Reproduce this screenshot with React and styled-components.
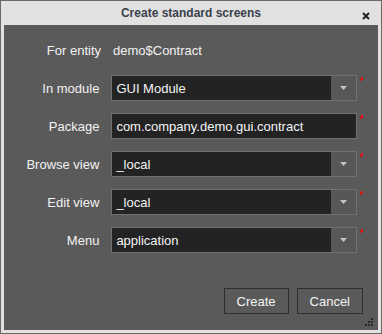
import React from 'react';
import styled, { createGlobalStyle } from 'styled-components';

const GlobalStyle = createGlobalStyle`
  html, body {
    margin: 0;
    padding: 0;
    background: #e1e1e1;
  }
  body {
    font-family: "Liberation Sans", Arial, sans-serif;
  }
`;

// Window frame
const Window = styled.div`
  box-sizing: border-box;
  width: 382px;
  height: 334px;
  display: flex;
  flex-direction: column;
  background: #e1e1e1;
  border: 1px solid #6a6a6a;
  padding: 0 3px 3px 3px;
`;

const TitleBar = styled.div`
  height: 24px;
  flex: none;
  display: flex;
  align-items: center;
  justify-content: center;
  position: relative;
  font-size: 12px;
  font-weight: bold;
  color: #3a414c;
`;

const CloseButton = styled.div`
  position: absolute;
  right: 8px;
  top: 11px;
  width: 8px;
  height: 8px;
  display: flex;
`;

// Content panel
const Content = styled.div`
  flex: 1;
  position: relative;
  display: flex;
  flex-direction: column;
  background: #5a5a5a;
  padding: 12px 15px 16px 4px;
`;

const Form = styled.div`
  display: flex;
  flex-direction: column;
  gap: 12px;
`;

const Row = styled.div`
  display: flex;
  align-items: center;
  height: 26px;
`;

const Label = styled.div`
  width: 93px;
  text-align: right;
  font-size: 13px;
  color: #f2f2f2;
  margin-right: 12px;
`;

const Value = styled.div`
  font-size: 13px;
  color: #f2f2f2;
`;

const Field = styled.div`
  box-sizing: border-box;
  width: 250px;
  height: 26px;
  display: flex;
  align-items: stretch;
  background: #232323;
  border: 1px solid #707070;
`;

const FieldText = styled.div`
  flex: 1;
  display: flex;
  align-items: center;
  padding-left: 4px;
  font-size: 13px;
  color: #f4f4f4;
`;

const DropButton = styled.div`
  width: 25px;
  display: flex;
  align-items: center;
  justify-content: center;
  background: #575757;
`;

const Required = styled.div`
  align-self: flex-start;
  margin: 2px 0 0 4px;
  width: 2px;
  height: 3px;
  background: #e01818;
  box-shadow: -1px 1px 0 #b02020;
`;

const Footer = styled.div`
  margin-top: auto;
  display: flex;
  justify-content: flex-end;
  gap: 8px;
`;

const Button = styled.div`
  box-sizing: border-box;
  height: 26px;
  padding: 0 12px;
  min-width: ${({ wide }) => (wide ? 61 : 59)}px;
  display: flex;
  align-items: center;
  justify-content: center;
  border: 1px solid #2e2e2e;
  font-size: 13px;
  color: #f4f4f4;
`;

const Grip = styled.svg`
  position: absolute;
  right: 5px;
  bottom: 4px;
`;

const Arrow = () => (
  <svg width="7" height="4" viewBox="0 0 7 4">
    <path d="M0 0h7L3.5 4z" fill="#c4c4c4" />
  </svg>
);

const ComboRow = ({ label, value, combo }) => (
  <Row>
    <Label>{label}</Label>
    <Field>
      <FieldText>{value}</FieldText>
      {combo && (
        <DropButton>
          <Arrow />
        </DropButton>
      )}
    </Field>
    <Required />
  </Row>
);

const App = () => (
  <>
    <GlobalStyle />
    <Window>
      <TitleBar>
        Create standard screens
        <CloseButton>
          <svg width="8" height="8" viewBox="0 0 8 8">
            <path d="M1 1l6 6M7 1L1 7" stroke="#222" strokeWidth="2" />
          </svg>
        </CloseButton>
      </TitleBar>
      <Content>
        <Form>
          <Row>
            <Label>For entity</Label>
            <Value>demo$Contract</Value>
          </Row>
          <ComboRow label="In module" value="GUI Module" combo />
          <ComboRow label="Package" value="com.company.demo.gui.contract" />
          <ComboRow label="Browse view" value="_local" combo />
          <ComboRow label="Edit view" value="_local" combo />
          <ComboRow label="Menu" value="application" combo />
        </Form>
        <Footer>
          <Button>Create</Button>
          <Button wide>Cancel</Button>
        </Footer>
        <Grip width="8" height="8" viewBox="0 0 8 8">
          <g fill="#2a2a2a">
            <rect x="6" y="0" width="2" height="2" />
            <rect x="3" y="3" width="2" height="2" />
            <rect x="6" y="3" width="2" height="2" />
            <rect x="0" y="6" width="2" height="2" />
            <rect x="3" y="6" width="2" height="2" />
            <rect x="6" y="6" width="2" height="2" />
          </g>
        </Grip>
      </Content>
    </Window>
  </>
);

export default App;
